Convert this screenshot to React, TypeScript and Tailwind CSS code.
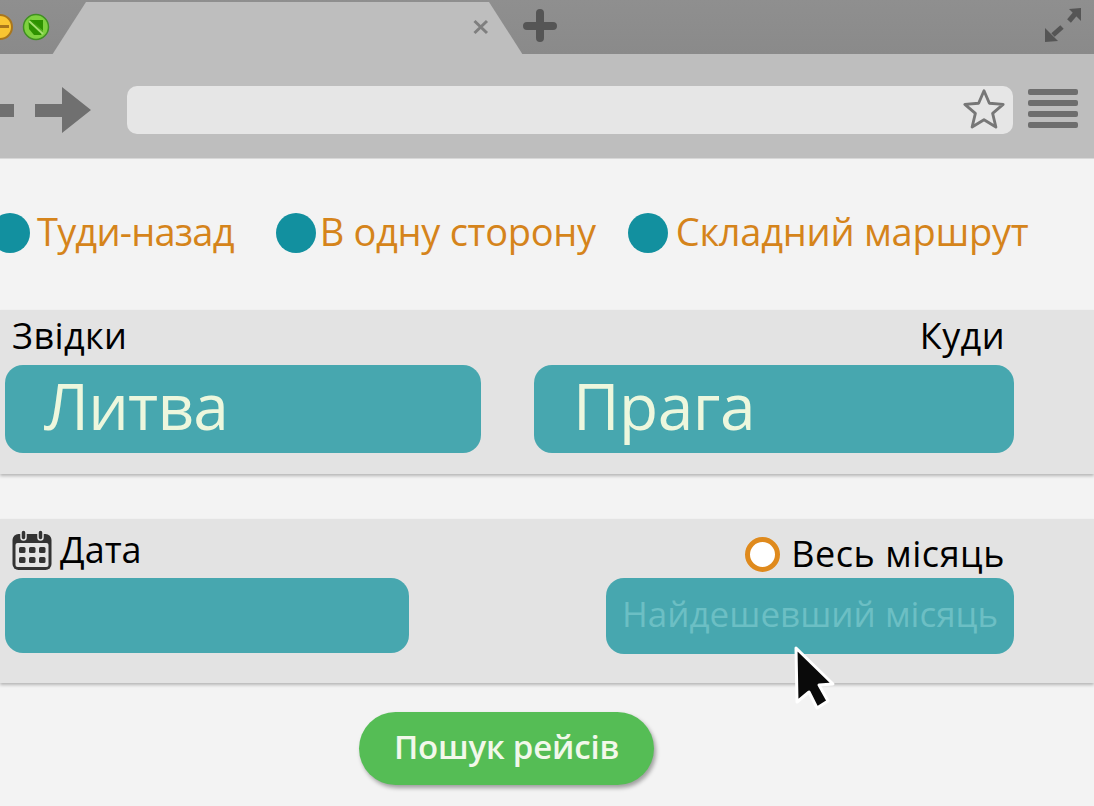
import type { ReactNode } from "react";

function RadioDot({ className }: { className: string }) {
  return <span className={`block h-10 w-10 shrink-0 rounded-full bg-[#12909f] ${className}`} />;
}

function TripOption({ label, dotClass, textClass, className }: { label: string; dotClass: string; textClass: string; className: string }) {
  return (
    <div className={`flex items-center ${className}`}>
      <RadioDot className={dotClass} />
      <span className={`pb-[3px] text-[38px] font-medium leading-none text-[#d5841b] ${textClass}`}>{label}</span>
    </div>
  );
}

function Field({ className, children }: { className: string; children?: ReactNode }) {
  return <div className={`flex items-center rounded-[18px] bg-[#47a7af] ${className}`}>{children}</div>;
}

function CalendarIcon() {
  return (
    <svg width="40" height="42" viewBox="0 0 40 42" className="shrink-0">
      <rect x="0.5" y="5" width="39" height="36" rx="6" fill="#333" />
      <rect x="3.5" y="14" width="33" height="24" rx="2" fill="#e4e4e4" />
      <rect x="9" y="1" width="5" height="10" rx="2.5" fill="#333" stroke="#e4e4e4" strokeWidth="1.5" />
      <rect x="26" y="1" width="5" height="10" rx="2.5" fill="#333" stroke="#e4e4e4" strokeWidth="1.5" />
      {[18, 28].map((y) =>
        [7, 17, 27].map((x) => <rect key={`${x}-${y}`} x={x} y={y} width="6.5" height="6" rx="1.5" fill="#333" />),
      )}
    </svg>
  );
}

export default function App() {
  return (
    <div className="relative h-[806px] w-[1094px] overflow-hidden bg-[#f3f3f3] font-['Open_Sans','Noto_Sans',sans-serif]">
      {/* tab strip */}
      <div className="relative flex h-[54px] items-start bg-gradient-to-b from-[#8f8f8f] to-[#8a8a8a]">
        <svg width="1094" height="54" viewBox="0 0 1094 54" className="absolute left-0 top-0">
          <polygon points="52,55 86,2 489,2 523,55" fill="#bebebe" />
          <circle cx="0" cy="27" r="12" fill="#f9c532" stroke="#a9761c" strokeWidth="2" />
          <rect x="-8" y="25" width="17" height="3" fill="#a9761c" />
          <circle cx="36" cy="27" r="12.5" fill="#7ed13f" stroke="#3f8f22" strokeWidth="1.5" />
          <polygon points="28.5,21 31,19.5 43,32 41,35 34,35 29,29" fill="#2d9200" />
          <polygon points="31,20 43,20 43,31" fill="#2d9200" />
          <path d="M29 21 L43 34" stroke="#a6e070" strokeWidth="2" />
          <path d="M474.5 21 L487 33 M487 21 L474.5 33" stroke="#7f7f7f" strokeWidth="3" />
          <path d="M540 13 V38 M527 26 H553" stroke="#555" strokeWidth="8" strokeLinecap="round" />
          <polygon points="1081,8 1069,9 1081,21" fill="#555" />
          <polygon points="1045,42 1045,28 1058,41" fill="#555" />
          <path d="M1075 14 L1069 21 M1062 27 L1053 35" stroke="#555" strokeWidth="5" />
        </svg>
      </div>

      {/* toolbar */}
      <div className="flex h-[104px] items-center bg-[#bebebe] pt-[8px] shadow-[0_1px_0_#d8d8d8]">
        <svg width="94" height="52" viewBox="0 0 94 52" className="shrink-0">
          <rect x="0" y="20" width="14" height="13" fill="#707070" />
          <polygon points="35,20 62,20 62,3 91,26 62,49 62,33 35,33" fill="#707070" />
        </svg>
        <div className="ml-[33px] flex h-[48px] w-[886px] items-center justify-end rounded-[10px] bg-[#e6e6e6] pb-[3px] pr-[6px]">
          <svg width="46" height="46" viewBox="0 0 24 24" fill="none" stroke="#777" strokeWidth="1.5" strokeLinejoin="round">
            <polygon points="12,2.5 14.8,9 22,9.6 16.5,14.3 18.2,21.4 12,17.6 5.8,21.4 7.5,14.3 2,9.6 9.2,9" />
          </svg>
        </div>
        <div className="mb-[4px] ml-[15px] flex w-[50px] flex-col gap-[5px]">
          <span className="h-[6px] rounded-[2px] bg-[#6e6e6e]" />
          <span className="h-[6px] rounded-[2px] bg-[#6e6e6e]" />
          <span className="h-[6px] rounded-[2px] bg-[#6e6e6e]" />
          <span className="h-[6px] rounded-[2px] bg-[#6e6e6e]" />
        </div>
      </div>

      {/* trip type */}
      <div className="flex h-[152px] items-start pt-[54px]">
        <TripOption label="Туди-назад" dotClass="-ml-[10px] mr-[7px]" textClass="tracking-[-0.8px]" className="" />
        <TripOption label="В одну сторону" dotClass="mr-[4px]" textClass="tracking-[-0.3px]" className="ml-[42px]" />
        <TripOption label="Складний маршрут" dotClass="mr-[8px]" textClass="tracking-[-0.25px]" className="ml-[32px]" />
      </div>

      {/* from / to */}
      <section className="h-[164px] bg-[#e3e3e3] shadow-[0_2px_3px_rgba(0,0,0,0.25)]">
        <div className="flex h-[55px] items-center justify-between pb-[4px] pl-[12px] pr-[89px] text-[36px] tracking-[0.4px] text-black">
          <span>Звідки</span>
          <span>Куди</span>
        </div>
        <div className="flex pl-[5px]">
          <Field className="h-[88px] w-[476px] pb-[6px] pl-[39px]">
            <span className="text-[64px] leading-none tracking-[-0.8px] text-[#edf7dd]">Литва</span>
          </Field>
          <Field className="ml-[53px] h-[88px] w-[480px] pb-[6px] pl-[39px]">
            <span className="text-[64px] leading-none tracking-[-0.5px] text-[#edf7dd]">Прага</span>
          </Field>
        </div>
      </section>

      {/* dates */}
      <section className="mt-[45px] h-[164px] bg-[#e3e3e3] shadow-[0_2px_3px_rgba(0,0,0,0.25)]">
        <div className="flex h-[59px] items-center justify-between pl-[12px] pr-[89px] pt-[8px] text-[36px] text-black">
          <div className="flex items-center gap-[8px] pb-[5px]">
            <CalendarIcon />
            <span>Дата</span>
          </div>
          <div className="flex items-center gap-[11px] pt-[3px]">
            <span className="block h-[35px] w-[35px] rounded-full border-[5px] border-[#df8a1d] bg-white" />
            <span className="tracking-[0.55px]">Весь місяць</span>
          </div>
        </div>
        <div className="flex pl-[5px]">
          <Field className="h-[75px] w-[404px]" />
          <Field className="ml-[197px] h-[76px] w-[408px] pb-[6px] pl-[16px]">
            <span className="text-[35px] leading-none text-[#6cbfc4]">Найдешевший місяць</span>
          </Field>
        </div>
      </section>

      <div className="flex justify-center pr-[81px] pt-[29px]">
        <button className="h-[73px] w-[295px] rounded-full bg-[#55bd55] pb-[4px] text-[33px] font-semibold tracking-[-0.2px] text-[#f2f8ea] shadow-[2px_3px_4px_rgba(0,0,0,0.35)]">
          Пошук рейсів
        </button>
      </div>

      {/* mouse cursor */}
      <svg width="44" height="66" viewBox="0 0 44 66" className="absolute left-[792px] top-[645px]">
        <polygon points="4,3 41,39 27,40 36,56 25,63 17,47 5,57" fill="#0a0a0a" stroke="#fff" strokeWidth="3" strokeLinejoin="round" />
      </svg>
    </div>
  );
}
